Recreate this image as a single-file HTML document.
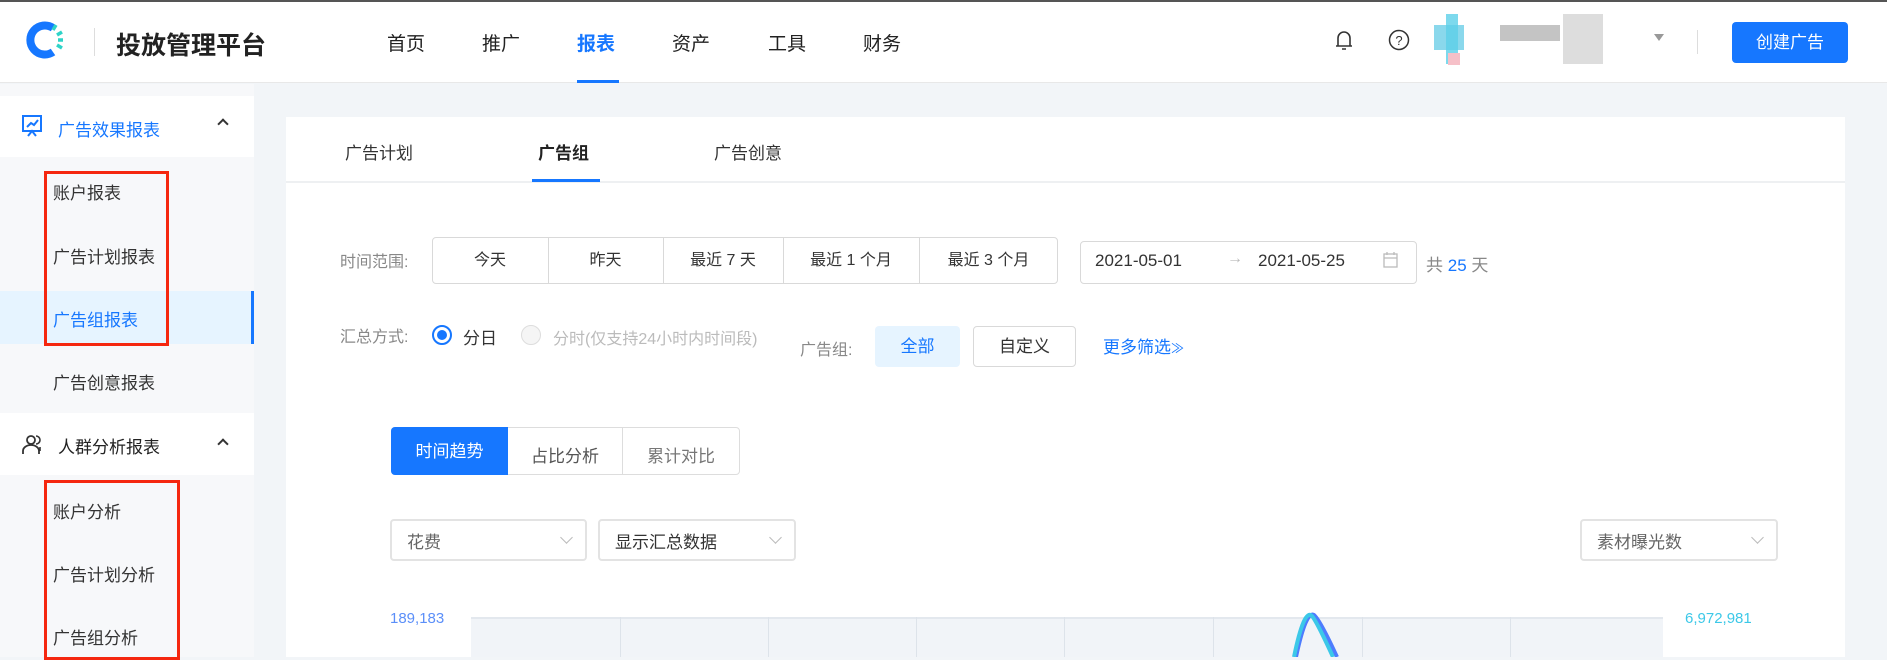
<!DOCTYPE html>
<html><head><meta charset="utf-8"><style>
*{margin:0;padding:0;box-sizing:border-box}
body{width:1887px;height:657px;overflow:hidden;background:#f2f5f8;font-family:"Liberation Sans","Noto Sans CJK SC",sans-serif;color:#333;position:relative}
.a{position:absolute;white-space:nowrap}
.hdr{position:absolute;left:0;top:0;width:1887px;height:83px;background:#fff;border-top:2px solid #555;border-bottom:1px solid #e8e8e8}
.nav{font-size:19px;color:#222;top:29px}
.side{position:absolute;left:0;top:84px;width:254px;height:573px;background:#f7f8fa}
.grp{position:absolute;left:0;width:254px;background:#fff}
.si{font-size:17px;color:#333;left:53px}
.card{position:absolute;left:286px;top:117px;width:1559px;height:540px;background:#fff}
.lbl{font-size:16px;color:#888}
.btn{position:absolute;border:1px solid #d9d9d9;border-radius:4px;background:#fff;font-size:16px;color:#333;text-align:center}
.sel{position:absolute;border:2px solid #e3e3e3;border-radius:4px;background:#fff;height:42px;font-size:17px;color:#666;padding:7px 0 0 15px}
.sel i{position:absolute;right:14px;top:12px;width:9px;height:9px;border-right:1.5px solid #bbb;border-bottom:1.5px solid #bbb;transform:rotate(45deg);font-style:normal}
.bt{top:246px;text-align:center;font-size:16px}
</style></head><body>
<div class="hdr"></div>
<svg class="a" style="left:25px;top:19px" width="42" height="42" viewBox="0 0 42 42">
<path d="M28 9 A14.5 14.5 0 1 0 28 33" fill="none" stroke="#1677ff" stroke-width="8"/>
<g stroke="#2ed3c8" stroke-width="3.5"><line x1="28" y1="11" x2="31" y2="6"/><line x1="32" y1="16" x2="37" y2="13"/><line x1="33" y1="21" x2="38" y2="21"/><line x1="32" y1="26" x2="37" y2="29"/></g></svg>
<div class="a" style="left:94px;top:28px;width:1px;height:28px;background:#ddd"></div>
<div class="a" style="left:116px;top:26px;font-size:25px;font-weight:bold;color:#222">投放管理平台</div>
<div class="a nav" style="left:387px">首页</div>
<div class="a nav" style="left:482px">推广</div>
<div class="a nav" style="left:577px;color:#1677ff;font-weight:bold">报表</div>
<div class="a nav" style="left:672px">资产</div>
<div class="a nav" style="left:768px">工具</div>
<div class="a nav" style="left:863px">财务</div>
<div class="a" style="left:577px;top:80px;width:42px;height:3px;background:#1677ff"></div>
<svg class="a" style="left:1334px;top:29px" width="20" height="24" viewBox="0 0 20 24"><path d="M4 17V9a6 6 0 0 1 12 0v8M2 17h16M8 20h4" fill="none" stroke="#333" stroke-width="1.6"/></svg>
<svg class="a" style="left:1388px;top:29px" width="22" height="22" viewBox="0 0 22 22"><circle cx="11" cy="11" r="9.5" fill="none" stroke="#333" stroke-width="1.5"/><text x="11" y="16" font-size="13" text-anchor="middle" fill="#333" font-family="Liberation Sans">?</text></svg>
<div class="a" style="left:1434px;top:25px;width:30px;height:25px;background:#8ad8ec"></div>
<div class="a" style="left:1446px;top:14px;width:12px;height:50px;background:#5ccfe8;opacity:.8"></div>
<div class="a" style="left:1448px;top:53px;width:12px;height:12px;background:#f6c0c8"></div>
<div class="a" style="left:1500px;top:25px;width:60px;height:16px;background:#c4c4c4"></div>
<div class="a" style="left:1563px;top:14px;width:40px;height:50px;background:#ddd"></div>
<div class="a" style="left:1654px;top:34px;width:0;height:0;border-left:5px solid transparent;border-right:5px solid transparent;border-top:7px solid #999"></div>
<div class="a" style="left:1697px;top:30px;width:1px;height:24px;background:#ddd"></div>
<div class="a" style="left:1732px;top:22px;width:116px;height:41px;background:#1677ff;border-radius:4px;color:#fff;font-size:17px;text-align:center;line-height:41px">创建广告</div>

<div class="side"></div>
<div class="grp" style="top:96px;height:61px"></div>
<svg class="a" style="left:21px;top:114px" width="22" height="24" viewBox="0 0 22 24"><rect x="2" y="2" width="18" height="15" fill="none" stroke="#1677ff" stroke-width="2"/><path d="M6 13l4-4 3 2 4-5M7 22l4-5 4 5" fill="none" stroke="#1677ff" stroke-width="2"/></svg>
<div class="a" style="left:58px;top:116px;font-size:17px;color:#1677ff">广告效果报表</div>
<div class="a" style="left:219px;top:120px;width:8px;height:8px;border-left:2px solid #333;border-top:2px solid #333;transform:rotate(45deg)"></div>
<div class="a si" style="top:179px">账户报表</div>
<div class="a si" style="top:243px">广告计划报表</div>
<div class="a" style="left:0;top:291px;width:254px;height:53px;background:#e6f4ff;border-right:3px solid #1677ff"></div>
<div class="a si" style="top:306px;color:#1677ff">广告组报表</div>
<div class="a si" style="top:369px">广告创意报表</div>
<div class="grp" style="top:413px;height:62px"></div>
<svg class="a" style="left:21px;top:433px" width="22" height="22" viewBox="0 0 22 22"><circle cx="10" cy="7" r="4" fill="none" stroke="#333" stroke-width="1.8"/><path d="M2 21v-3a8 6 0 0 1 16 0v3" fill="none" stroke="#333" stroke-width="1.8"/><path d="M15 3a4 4 0 0 1 0 8M19 14v4" fill="none" stroke="#333" stroke-width="1.6"/></svg>
<div class="a" style="left:58px;top:433px;font-size:17px;color:#222">人群分析报表</div>
<div class="a" style="left:219px;top:440px;width:8px;height:8px;border-left:2px solid #333;border-top:2px solid #333;transform:rotate(45deg)"></div>
<div class="a si" style="top:498px">账户分析</div>
<div class="a si" style="top:561px">广告计划分析</div>
<div class="a si" style="top:624px">广告组分析</div>
<div class="a" style="left:44px;top:171px;width:125px;height:175px;border:3px solid #f5270f"></div>
<div class="a" style="left:44px;top:480px;width:136px;height:180px;border:3px solid #f5270f"></div>

<div class="card"></div>
<div class="a" style="left:286px;top:181px;width:1559px;height:2px;background:#eef0f2"></div>
<div class="a" style="left:345px;top:139px;font-size:17px;color:#333">广告计划</div>
<div class="a" style="left:538px;top:139px;font-size:17px;color:#222;font-weight:bold">广告组</div>
<div class="a" style="left:714px;top:139px;font-size:17px;color:#333">广告创意</div>
<div class="a" style="left:532px;top:179px;width:68px;height:3px;background:#1677ff"></div>

<div class="a lbl" style="left:340px;top:248px">时间范围:</div>
<div class="btn" style="left:432px;top:237px;width:626px;height:47px"></div>
<div class="a bt" style="left:432px;width:116px">今天</div>
<div class="a bt" style="left:548px;width:115px">昨天</div>
<div class="a bt" style="left:663px;width:120px">最近 7 天</div>
<div class="a bt" style="left:783px;width:136px">最近 1 个月</div>
<div class="a bt" style="left:919px;width:139px">最近 3 个月</div>
<div class="a" style="left:548px;top:238px;width:1px;height:45px;background:#d9d9d9"></div>
<div class="a" style="left:663px;top:238px;width:1px;height:45px;background:#d9d9d9"></div>
<div class="a" style="left:783px;top:238px;width:1px;height:45px;background:#d9d9d9"></div>
<div class="a" style="left:919px;top:238px;width:1px;height:45px;background:#d9d9d9"></div>
<div class="btn" style="left:1080px;top:241px;width:337px;height:43px"></div>
<div class="a" style="left:1095px;top:251px;font-size:17px;color:#333">2021-05-01</div>
<div class="a" style="left:1227px;top:250px;font-size:16px;color:#bbb">→</div>
<div class="a" style="left:1258px;top:251px;font-size:17px;color:#333">2021-05-25</div>
<svg class="a" style="left:1383px;top:251px" width="15" height="17" viewBox="0 0 15 17"><rect x="1" y="3" width="13" height="13" fill="none" stroke="#bbb" stroke-width="1.3"/><path d="M1 7h13M4 1v3M11 1v3" stroke="#bbb" stroke-width="1.3"/></svg>
<div class="a" style="left:1426px;top:251px;font-size:17px;color:#888">共 <span style="color:#1677ff">25</span> 天</div>

<div class="a lbl" style="left:340px;top:323px">汇总方式:</div>
<div class="a" style="left:432px;top:325px;width:20px;height:20px;border:2px solid #1677ff;border-radius:50%"></div>
<div class="a" style="left:437px;top:330px;width:10px;height:10px;background:#1677ff;border-radius:50%"></div>
<div class="a" style="left:463px;top:324px;font-size:17px;color:#333">分日</div>
<div class="a" style="left:521px;top:325px;width:20px;height:20px;border:1px solid #ddd;border-radius:50%;background:#f5f5f5"></div>
<div class="a" style="left:553px;top:325px;font-size:16px;color:#bbb">分时(仅支持24小时内时间段)</div>
<div class="a lbl" style="left:800px;top:336px">广告组:</div>
<div class="a" style="left:875px;top:326px;width:85px;height:41px;background:#e6f4ff;border-radius:4px;color:#1677ff;font-size:17px;text-align:center;line-height:41px">全部</div>
<div class="btn" style="left:973px;top:326px;width:103px;height:41px;line-height:39px;font-size:17px">自定义</div>
<div class="a" style="left:1103px;top:333px;font-size:17px;color:#1677ff">更多筛选<span style="font-size:13px">≫</span></div>

<div class="a" style="left:391px;top:427px;width:349px;height:48px;border:1px solid #ddd;border-radius:4px;background:#fff"></div>
<div class="a" style="left:391px;top:427px;width:117px;height:48px;background:#1677ff;border-radius:4px 0 0 4px;color:#fff;font-size:17px;text-align:center;line-height:50px">时间趋势</div>
<div class="a" style="left:508px;top:442px;width:114px;text-align:center;font-size:17px;color:#555">占比分析</div>
<div class="a" style="left:622px;top:428px;width:1px;height:46px;background:#ddd"></div>
<div class="a" style="left:622px;top:442px;width:118px;text-align:center;font-size:17px;color:#777">累计对比</div>

<div class="sel" style="left:390px;top:519px;width:197px">花费<i></i></div>
<div class="sel" style="left:598px;top:519px;width:198px;color:#333">显示汇总数据<i></i></div>
<div class="sel" style="left:1580px;top:519px;width:198px">素材曝光数<i></i></div>

<div class="a" style="left:390px;top:610px;font-size:15px;color:#5b8ff9">189,183</div>
<div class="a" style="left:1685px;top:610px;font-size:15px;color:#3cc8e8">6,972,981</div>
<div class="a" style="left:471px;top:617px;width:1192px;height:40px;background:#f1f4f8;border-top:2px solid #e3e8ee"></div>
<div class="a" style="left:620px;top:617px;width:1px;height:40px;background:#dde3ea"></div>
<div class="a" style="left:768px;top:617px;width:1px;height:40px;background:#dde3ea"></div>
<div class="a" style="left:916px;top:617px;width:1px;height:40px;background:#dde3ea"></div>
<div class="a" style="left:1064px;top:617px;width:1px;height:40px;background:#dde3ea"></div>
<div class="a" style="left:1213px;top:617px;width:1px;height:40px;background:#dde3ea"></div>
<div class="a" style="left:1362px;top:617px;width:1px;height:40px;background:#dde3ea"></div>
<div class="a" style="left:1510px;top:617px;width:1px;height:40px;background:#dde3ea"></div>
<svg class="a" style="left:1280px;top:600px" width="80" height="57" viewBox="0 0 80 57"><path d="M16 57 Q26 10 34 15 Q40 20 57 57" fill="none" stroke="#4d7cfe" stroke-width="4"/><path d="M14 57 Q24 8 32 16 Q37 22 53 57" fill="none" stroke="#3cc8e8" stroke-width="4"/></svg>
</body></html>
